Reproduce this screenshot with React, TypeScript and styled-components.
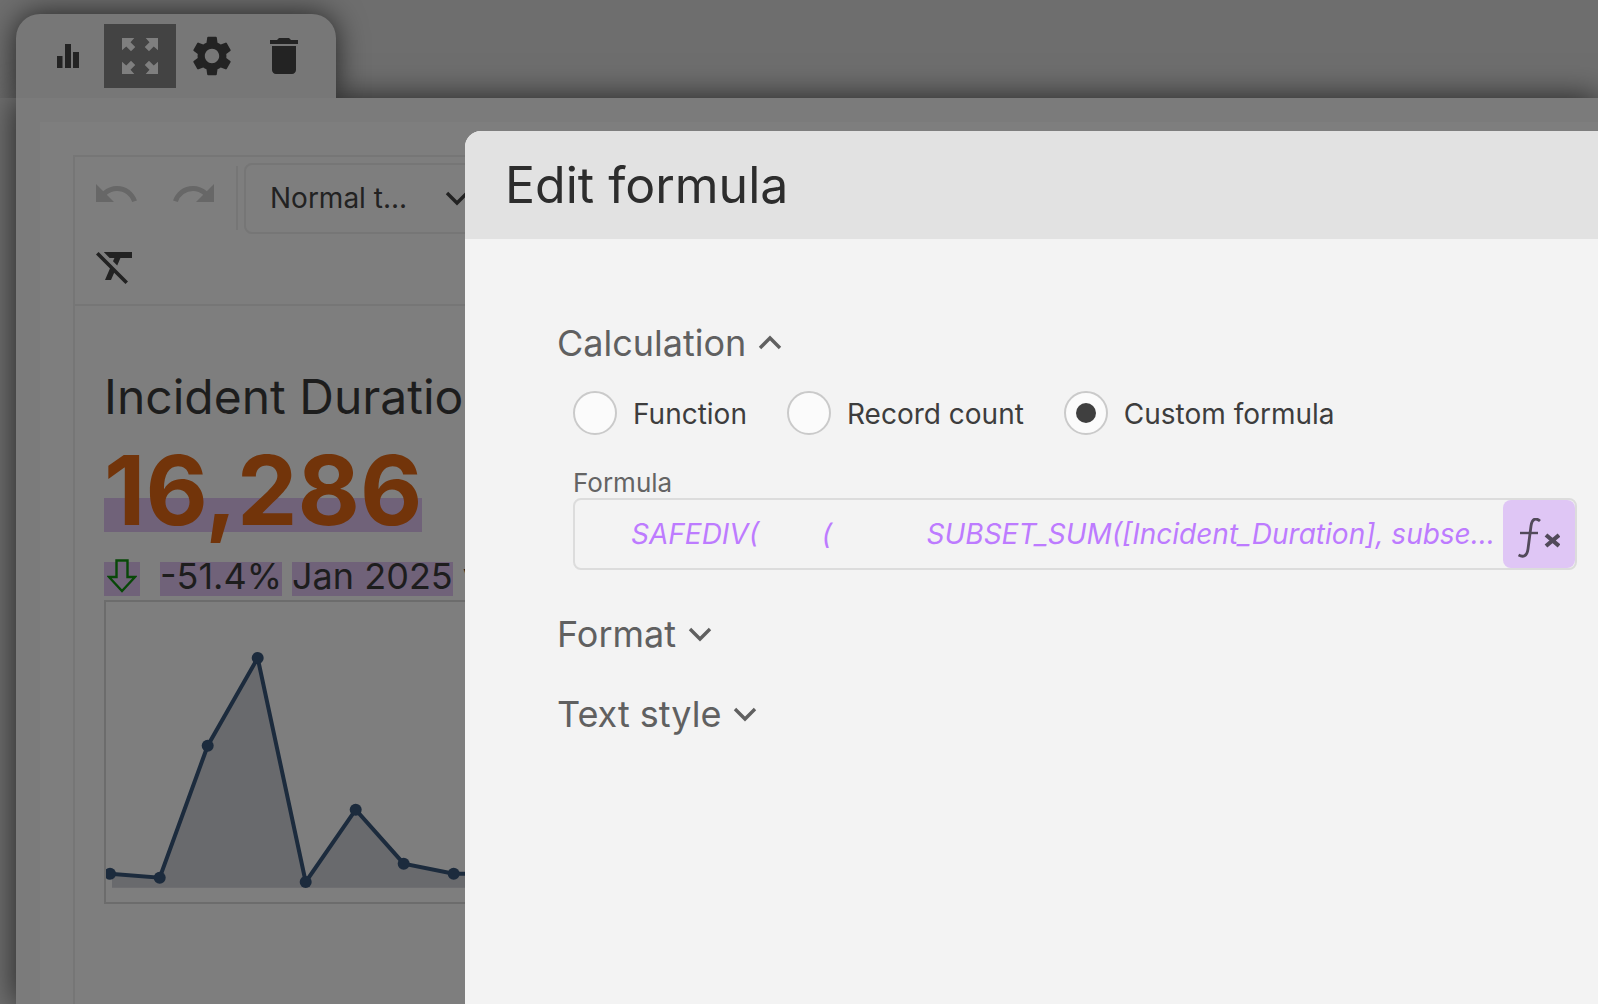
import { MdDelete, MdFormatClear, MdRedo, MdSettings, MdUndo } from "react-icons/md";
import styled, { createGlobalStyle } from "styled-components";

const GlobalStyle = createGlobalStyle`
  html, body {
    margin: 0;
    padding: 0;
    background: #6e6e6e;
  }
  * {
    box-sizing: border-box;
  }
`;

const Page = styled.div`
  position: relative;
  width: 1598px;
  height: 1004px;
  overflow: hidden;
  background: #6e6e6e;
  font-family: Inter, "Liberation Sans", sans-serif;
  display: flex;
  flex-direction: column;
  padding: 14px 0 0 16px;
`;

const TabBar = styled.div`
  position: relative;
  z-index: 2;
  flex: none;
  width: 320px;
  height: 84px;
  padding: 10px 0 0 16px;
  background: #777777;
  border-radius: 24px 24px 0 0;
  box-shadow: 0 0 30px rgba(0, 0, 0, 0.7);
  clip-path: inset(-40px -40px 0 -40px);
  display: flex;
  align-items: flex-start;
`;

const TabButton = styled.div<{ $active?: boolean }>`
  width: 72px;
  height: 64px;
  display: flex;
  align-items: center;
  justify-content: center;
  color: ${(p) => (p.$active ? "#7f7f7f" : "#232323")};
  background: ${(p) => (p.$active ? "#434343" : "transparent")};
`;

const Workspace = styled.div`
  position: relative;
  z-index: 1;
  flex: 1;
  background: #7b7b7b;
  box-shadow: 0 0 30px rgba(0, 0, 0, 0.7);
  padding: 24px 0 0 24px;
  display: flex;
`;

const Sheet = styled.div`
  flex: 1;
  background: #7e7e7e;
  padding: 33px 0 0 33px;
  display: flex;
`;

const Editor = styled.div`
  flex: 1;
  border-left: 2px solid #767676;
  border-top: 2px solid #767676;
  display: flex;
  flex-direction: column;
`;

const Toolbar = styled.div`
  flex: none;
  height: 149px;
  border-bottom: 2px solid #767676;
  display: flex;
  flex-direction: column;
`;

const ToolRow = styled.div<{ $tall?: boolean }>`
  height: ${(p) => (p.$tall ? "65px" : "82px")};
  display: flex;
  align-items: center;
  padding-left: 17px;
  padding-bottom: ${(p) => (p.$tall ? "11px" : "0")};
`;

const ToolIcon = styled.div<{ $disabled?: boolean }>`
  width: 48px;
  height: 48px;
  margin-right: 30px;
  margin-bottom: ${(p) => (p.$disabled ? "9px" : "0")};
  display: flex;
  align-items: center;
  justify-content: center;
  color: ${(p) => (p.$disabled ? "#676767" : "#222222")};
`;

const ToolDivider = styled.div`
  width: 2px;
  height: 64px;
  background: #767676;
  margin-left: -12px;
  margin-right: 6px;
`;

const BlockSelect = styled.div`
  width: 320px;
  height: 71px;
  flex: none;
  border: 2px solid #767676;
  border-radius: 8px;
  padding-left: 24px;
  display: flex;
  align-items: center;
  gap: 38px;
  font-size: 28px;
  color: #222222;
`;

const Content = styled.div`
  padding: 62px 0 0 29px;
  width: 1400px;
`;

const Heading = styled.div`
  font-size: 48px;
  line-height: 58px;
  color: #1d1d1d;
  white-space: nowrap;
`;

const Mark = styled.span`
  background: #706279;
  font-size: 28px;
  color: #1d1d1d;
  white-space: nowrap;
`;

const BigRow = styled.div`
  margin-top: 14px;
  height: 116px;
  font-size: 28px;
  line-height: 100px;
`;

const BigNumber = styled.span`
  font-size: 96px;
  font-weight: 700;
  color: #72340a;
`;

const DeltaRow = styled.div`
  height: 44px;
  font-size: 28px;
  line-height: 40px;
  white-space: nowrap;
`;

const ArrowMark = styled(Mark)`
  position: relative;
  display: inline-block;
  width: 36px;
  height: 34px;
  vertical-align: -7px;
  margin-right: 20px;
`;

const SpacedMark = styled(Mark)`
  margin-right: 10px;
`;

const DeltaText = styled.span`
  font-size: 36px;
  color: #1d1d1d;
`;

const ArrowIcon = styled.svg`
  position: absolute;
  left: 3px;
  top: -3px;
`;

const ChartBox = styled.div`
  width: 1300px;
  height: 304px;
  border: 2px solid #6c6c6c;
`;

const ChartSvg = styled.svg`
  display: block;
`;

const Dialog = styled.div`
  position: absolute;
  z-index: 3;
  left: 465px;
  top: 131px;
  right: 0;
  bottom: 0;
  background: #f3f3f3;
  border-radius: 16px 0 0 0;
  overflow: hidden;
`;

const DialogHeader = styled.div`
  height: 108px;
  background: #e2e2e2;
  padding-left: 40px;
  display: flex;
  align-items: center;
  font-size: 50px;
  color: #2d2d2d;
`;

const DialogBody = styled.div`
  padding: 80px 21px 0 92px;
`;

const SectionTitle = styled.div<{ $gap: number }>`
  height: 48px;
  margin-bottom: ${(p) => p.$gap}px;
  display: flex;
  align-items: center;
  gap: 12px;
  font-size: 36px;
  color: #606060;
`;

const RadioRow = styled.div`
  display: flex;
  align-items: center;
  padding-left: 16px;
  height: 44px;
  margin-bottom: 34px;
`;

const RadioOption = styled.div<{ $gap: number }>`
  display: flex;
  align-items: center;
  gap: 16px;
  margin-right: ${(p) => p.$gap}px;
  font-size: 28px;
  color: #3d3d3d;
`;

const RadioLabel = styled.span`
  padding-top: 2px;
`;

const RadioCircle = styled.div<{ $checked?: boolean }>`
  width: 44px;
  height: 44px;
  border-radius: 50%;
  border: 2px solid #cacaca;
  background: #fbfbfb;
  display: flex;
  align-items: center;
  justify-content: center;

  &::after {
    content: "";
    display: ${(p) => (p.$checked ? "block" : "none")};
    width: 20px;
    height: 20px;
    border-radius: 50%;
    background: #3f3f3f;
  }
`;

const FieldLabel = styled.div`
  margin-left: 16px;
  font-size: 26px;
  line-height: 27px;
  margin-bottom: 2px;
  color: #646464;
`;

const FormulaField = styled.div`
  margin-left: 16px;
  height: 72px;
  border: 2px solid #dcdcdc;
  border-radius: 8px;
  display: flex;
  align-items: center;
  padding-left: 56px;
  margin-bottom: 40px;
`;

const FormulaText = styled.div`
  flex: 1;
  min-width: 0;
  font-size: 28px;
  font-style: italic;
  color: #bd7bff;
  white-space: pre;
  overflow: hidden;
  text-overflow: ellipsis;
  margin-right: 8px;
`;

const FunctionButton = styled.div`
  flex: none;
  width: 72px;
  height: 68px;
  padding-top: 8px;
  background: #dfc6f5;
  border-radius: 8px;
  display: flex;
  align-items: center;
  justify-content: center;
  color: #524a5a;
`;

const Chevron = ({ up }: { up?: boolean }) => (
  <svg width="24" height="24" viewBox="0 0 24 24" fill="none">
    <path
      d={up ? "M2 17 L12 7 L22 17" : "M2 7 L12 17 L22 7"}
      stroke="currentColor"
      strokeWidth="3.4"
    />
  </svg>
);

const BarsIcon = () => (
  <svg width="22" height="24" viewBox="0 0 22 24" fill="currentColor">
    <rect x="0" y="12" width="5.5" height="12" />
    <rect x="8" y="0" width="6" height="24" />
    <rect x="16" y="8" width="6" height="16" />
  </svg>
);

const ExpandIcon = () => (
  <svg width="36" height="36" viewBox="0 0 38 38" fill="currentColor">
    <path d="M0 0 H13 L9 4.5 L14 9.5 L9.5 14 L4.5 9 L0 13 Z" />
    <path d="M38 0 H25 L29 4.5 L24 9.5 L28.5 14 L33.5 9 L38 13 Z" />
    <path d="M0 38 H13 L9 33.5 L14 28.5 L9.5 24 L4.5 29 L0 25 Z" />
    <path d="M38 38 H25 L29 33.5 L24 28.5 L28.5 24 L33.5 29 L38 25 Z" />
  </svg>
);

const FxIcon = () => (
  <svg width="42" height="40" viewBox="0 0 42 40" fill="none" stroke="currentColor">
    <path
      d="M22 3 C18 -0.5 14 0.5 13 8 L10 31 C9 38.5 5 39.5 0.5 37"
      strokeWidth="2.8"
    />
    <path d="M2 15 H20" strokeWidth="2.4" />
    <path d="M28 17 L41 28 M41 17 L28 28" strokeWidth="4.2" />
  </svg>
);

const chartPoints = [
  [4, 271.7],
  [53.7, 275.7],
  [101.7, 143.7],
  [151.7, 56],
  [199.7, 280],
  [249.7, 207.7],
  [297.7, 261.7],
  [347.7, 271.7],
  [397.7, 271.7],
];

const Sparkline = () => {
  const line = chartPoints.map((p) => p.join(",")).join(" ");
  const area = chartPoints.slice(1).map((p) => p.join(",")).join(" ");
  return (
    <ChartSvg width="1296" height="300" viewBox="0 0 1296 300">
      <polygon points={`6,285.7 6,272 ${area} 397.7,285.7`} fill="#696a6d" />
      <polyline points={line} fill="none" stroke="#1c2b3d" strokeWidth="4" />
      {chartPoints.map((p) => (
        <circle key={p[0]} cx={p[0]} cy={p[1]} r="6" fill="#1c2b3d" />
      ))}
    </ChartSvg>
  );
};

export default function App() {
  return (
    <Page>
      <GlobalStyle />
      <TabBar>
        <TabButton>
          <BarsIcon />
        </TabButton>
        <TabButton $active>
          <ExpandIcon />
        </TabButton>
        <TabButton>
          <MdSettings size={48} />
        </TabButton>
        <TabButton>
          <MdDelete size={48} />
        </TabButton>
      </TabBar>
      <Workspace>
        <Sheet>
          <Editor>
            <Toolbar>
              <ToolRow>
                <ToolIcon $disabled>
                  <MdUndo size={50} />
                </ToolIcon>
                <ToolIcon $disabled>
                  <MdRedo size={50} />
                </ToolIcon>
                <ToolDivider />
                <BlockSelect>
                  Normal t...
                  <Chevron />
                </BlockSelect>
              </ToolRow>
              <ToolRow $tall>
                <ToolIcon>
                  <MdFormatClear size={48} />
                </ToolIcon>
              </ToolRow>
            </Toolbar>
            <Content>
              <Heading>Incident Duration</Heading>
              <BigRow>
                <Mark>
                  <BigNumber>16,286</BigNumber>
                </Mark>
              </BigRow>
              <DeltaRow>
                <ArrowMark>
                  <ArrowIcon width="30" height="34" viewBox="0 0 30 34" fill="none">
                    <path
                      d="M9.5 1.5 H20.5 V18 H28 L15 32 L2 18 H9.5 Z"
                      stroke="#084808"
                      strokeWidth="2.4"
                    />
                  </ArrowIcon>
                </ArrowMark>
                <SpacedMark>
                  <DeltaText>-51.4%</DeltaText>
                </SpacedMark>
                <SpacedMark>
                  <DeltaText>Jan 2025</DeltaText>
                </SpacedMark>
                <DeltaText>vs</DeltaText>
              </DeltaRow>
              <ChartBox>
                <Sparkline />
              </ChartBox>
            </Content>
          </Editor>
        </Sheet>
      </Workspace>
      <Dialog>
        <DialogHeader>Edit formula</DialogHeader>
        <DialogBody>
          <SectionTitle $gap={24}>
            Calculation
            <Chevron up />
          </SectionTitle>
          <RadioRow>
            <RadioOption $gap={40}>
              <RadioCircle />
              <RadioLabel>Function</RadioLabel>
            </RadioOption>
            <RadioOption $gap={40}>
              <RadioCircle />
              <RadioLabel>Record count</RadioLabel>
            </RadioOption>
            <RadioOption $gap={0}>
              <RadioCircle $checked />
              <RadioLabel>Custom formula</RadioLabel>
            </RadioOption>
          </RadioRow>
          <FieldLabel>Formula</FieldLabel>
          <FormulaField>
            <FormulaText>
              {"SAFEDIV(        (            SUBSET_SUM([Incident_Duration], subset_filter), 1000)"}
            </FormulaText>
            <FunctionButton>
              <FxIcon />
            </FunctionButton>
          </FormulaField>
          <SectionTitle $gap={32}>
            Format
            <Chevron />
          </SectionTitle>
          <SectionTitle $gap={0}>
            Text style
            <Chevron />
          </SectionTitle>
        </DialogBody>
      </Dialog>
    </Page>
  );
}
